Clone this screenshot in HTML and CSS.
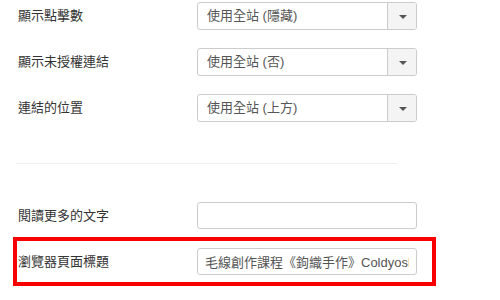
FILE: index.html
```html
<!DOCTYPE html>
<html lang="zh-Hant">
<head>
  <meta charset="UTF-8">
  <title>選項</title>
  <link rel="stylesheet" href="styles.css">
</head>
<body>
<div class="form">
  <div class="row">
    <label class="label">顯示點擊數</label>
    <div class="select"><span>使用全站 (隱藏)</span><b class="arrow"></b></div>
  </div>
  <div class="row">
    <label class="label">顯示未授權連結</label>
    <div class="select"><span>使用全站 (否)</span><b class="arrow"></b></div>
  </div>
  <div class="row">
    <label class="label">連結的位置</label>
    <div class="select"><span>使用全站 (上方)</span><b class="arrow"></b></div>
  </div>

  <hr class="divider">

  <div class="row row-input">
    <label class="label" for="readmore">閱讀更多的文字</label>
    <input class="text" id="readmore" type="text" value="">
  </div>
  <div class="row row-input highlight">
    <label class="label" for="pagetitle">瀏覽器頁面標題</label>
    <input class="text" id="pagetitle" type="text" value="毛線創作課程《鉤織手作》Coldyosl 冷冷的毛線">
  </div>
</div>
</body>
</html>
```

FILE: styles.css
```css
body {
  margin: 0;
  background: #fff;
  font-family: "Liberation Sans", "Noto Sans CJK TC", sans-serif;
  font-size: 13px;
  color: #333;
}
.form {
  padding-top: 2px;
}
.row {
  display: flex;
  align-items: center;
  padding-left: 18px;
  margin-bottom: 18px;
}
.label {
  width: 179px;
  line-height: 18px;
  color: #333;
}
.select {
  display: flex;
  width: 220px;
  height: 28px;
  box-sizing: border-box;
  border: 1px solid #ccc;
  border-radius: 3px;
  background: #fff;
  overflow: hidden;
}
.select span {
  flex: 1;
  padding-left: 9px;
  line-height: 26px;
  color: #555;
  white-space: nowrap;
}
.arrow {
  width: 28px;
  border-left: 1px solid #ccc;
  background: #f4f4f4;
  position: relative;
}
.arrow::after {
  content: "";
  position: absolute;
  left: 11px;
  top: 12px;
  border-left: 4px solid transparent;
  border-right: 4px solid transparent;
  border-top: 4px solid #555;
}
.divider {
  border: 0;
  border-top: 1px solid #eee;
  margin: 41px 0 38px 16px;
  width: 381px;
}
.row-input {
  margin-bottom: 8px;
}
.text {
  width: 220px;
  height: 27px;
  box-sizing: border-box;
  border: 1px solid #ccc;
  border-radius: 3px;
  padding: 0 7px;
  font-family: "Liberation Sans", "Noto Sans CJK TC", sans-serif;
  font-size: 13px;
  color: #555;
  outline: none;
}
.highlight {
  margin-left: 13px;
  width: 423px;
  box-sizing: border-box;
  padding: 7px 0 7px 1px;
  border: 4px solid #f80000;
}
```
